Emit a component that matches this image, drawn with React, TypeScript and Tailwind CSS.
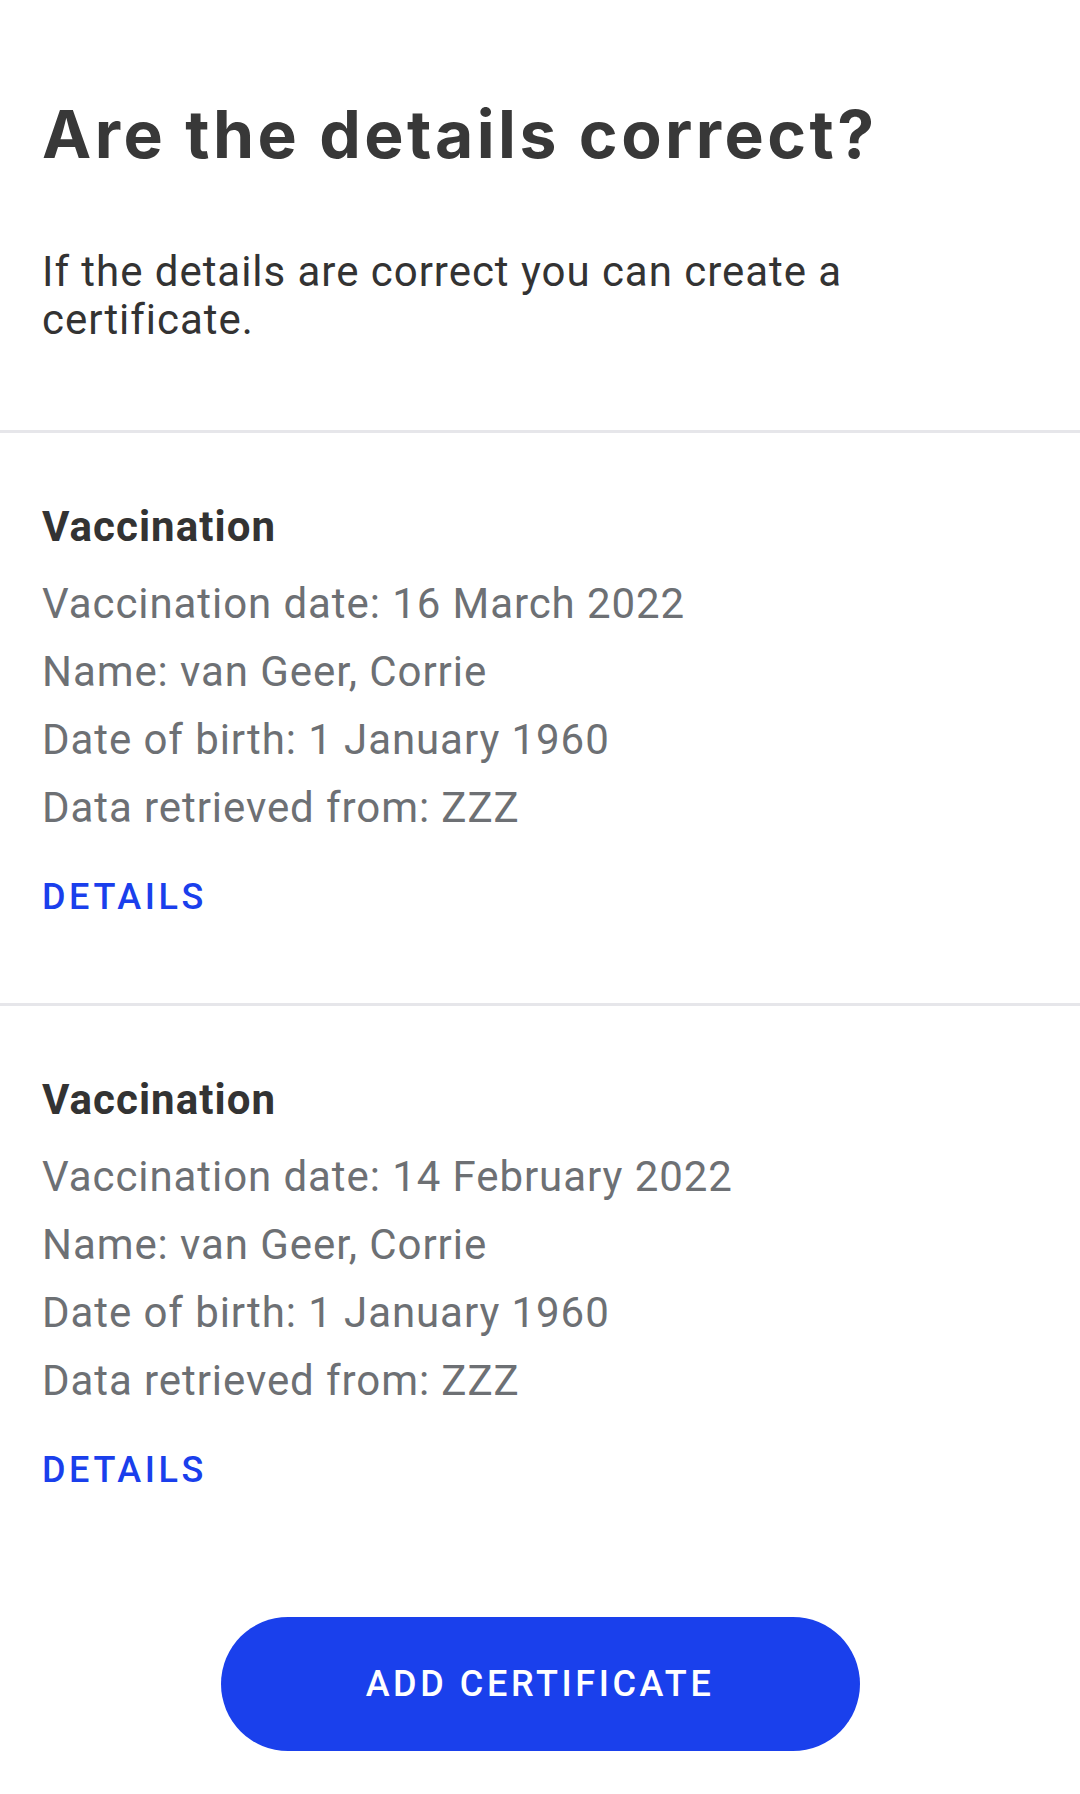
const items = [
  { date: "16 March 2022" },
  { date: "14 February 2022" },
];

function VaccinationItem({ date }: { date: string }) {
  return (
    <div className="border-t-[3px] border-[#e6e6ea] px-[42px] pt-[60px] pb-[82px]">
      <h2 className="text-[42px] leading-[68px] font-bold text-[#333333] tracking-[0.025em]">Vaccination</h2>
      <div className="mt-[9px] text-[42px] leading-[68px] text-[#6d7074] tracking-[0.022em]">
        <p>Vaccination date: {date}</p>
        <p>Name: van Geer, Corrie</p>
        <p>Date of birth: 1 January 1960</p>
        <p>Data retrieved from: ZZZ</p>
      </div>
      <button className="mt-[31px] block text-[36px] leading-[48px] font-medium tracking-[0.1em] text-[#1a3fec]">
        DETAILS
      </button>
    </div>
  );
}

export default function App() {
  return (
    <div className="min-h-screen bg-white flex flex-col font-['Roboto',sans-serif]">
      <div className="px-[42px] pt-[95px] pb-[86px]">
        <h1 className="font-['Inter',sans-serif] text-[66px] leading-[1.2] font-bold text-[#383838] tracking-[0.052em]">
          Are the details correct?
        </h1>
        <p className="mt-[74px] text-[42px] leading-[48px] text-[#333333] tracking-[0.023em]">
          If the details are correct you can create a certificate.
        </p>
      </div>
      {items.map((it) => (
        <VaccinationItem key={it.date} date={it.date} />
      ))}
      <div className="flex justify-center pt-[41px]">
        <button className="w-[639px] h-[134px] rounded-full bg-[#1a40ec] text-white text-[36px] font-medium tracking-[0.1em]">
          ADD CERTIFICATE
        </button>
      </div>
    </div>
  );
}
